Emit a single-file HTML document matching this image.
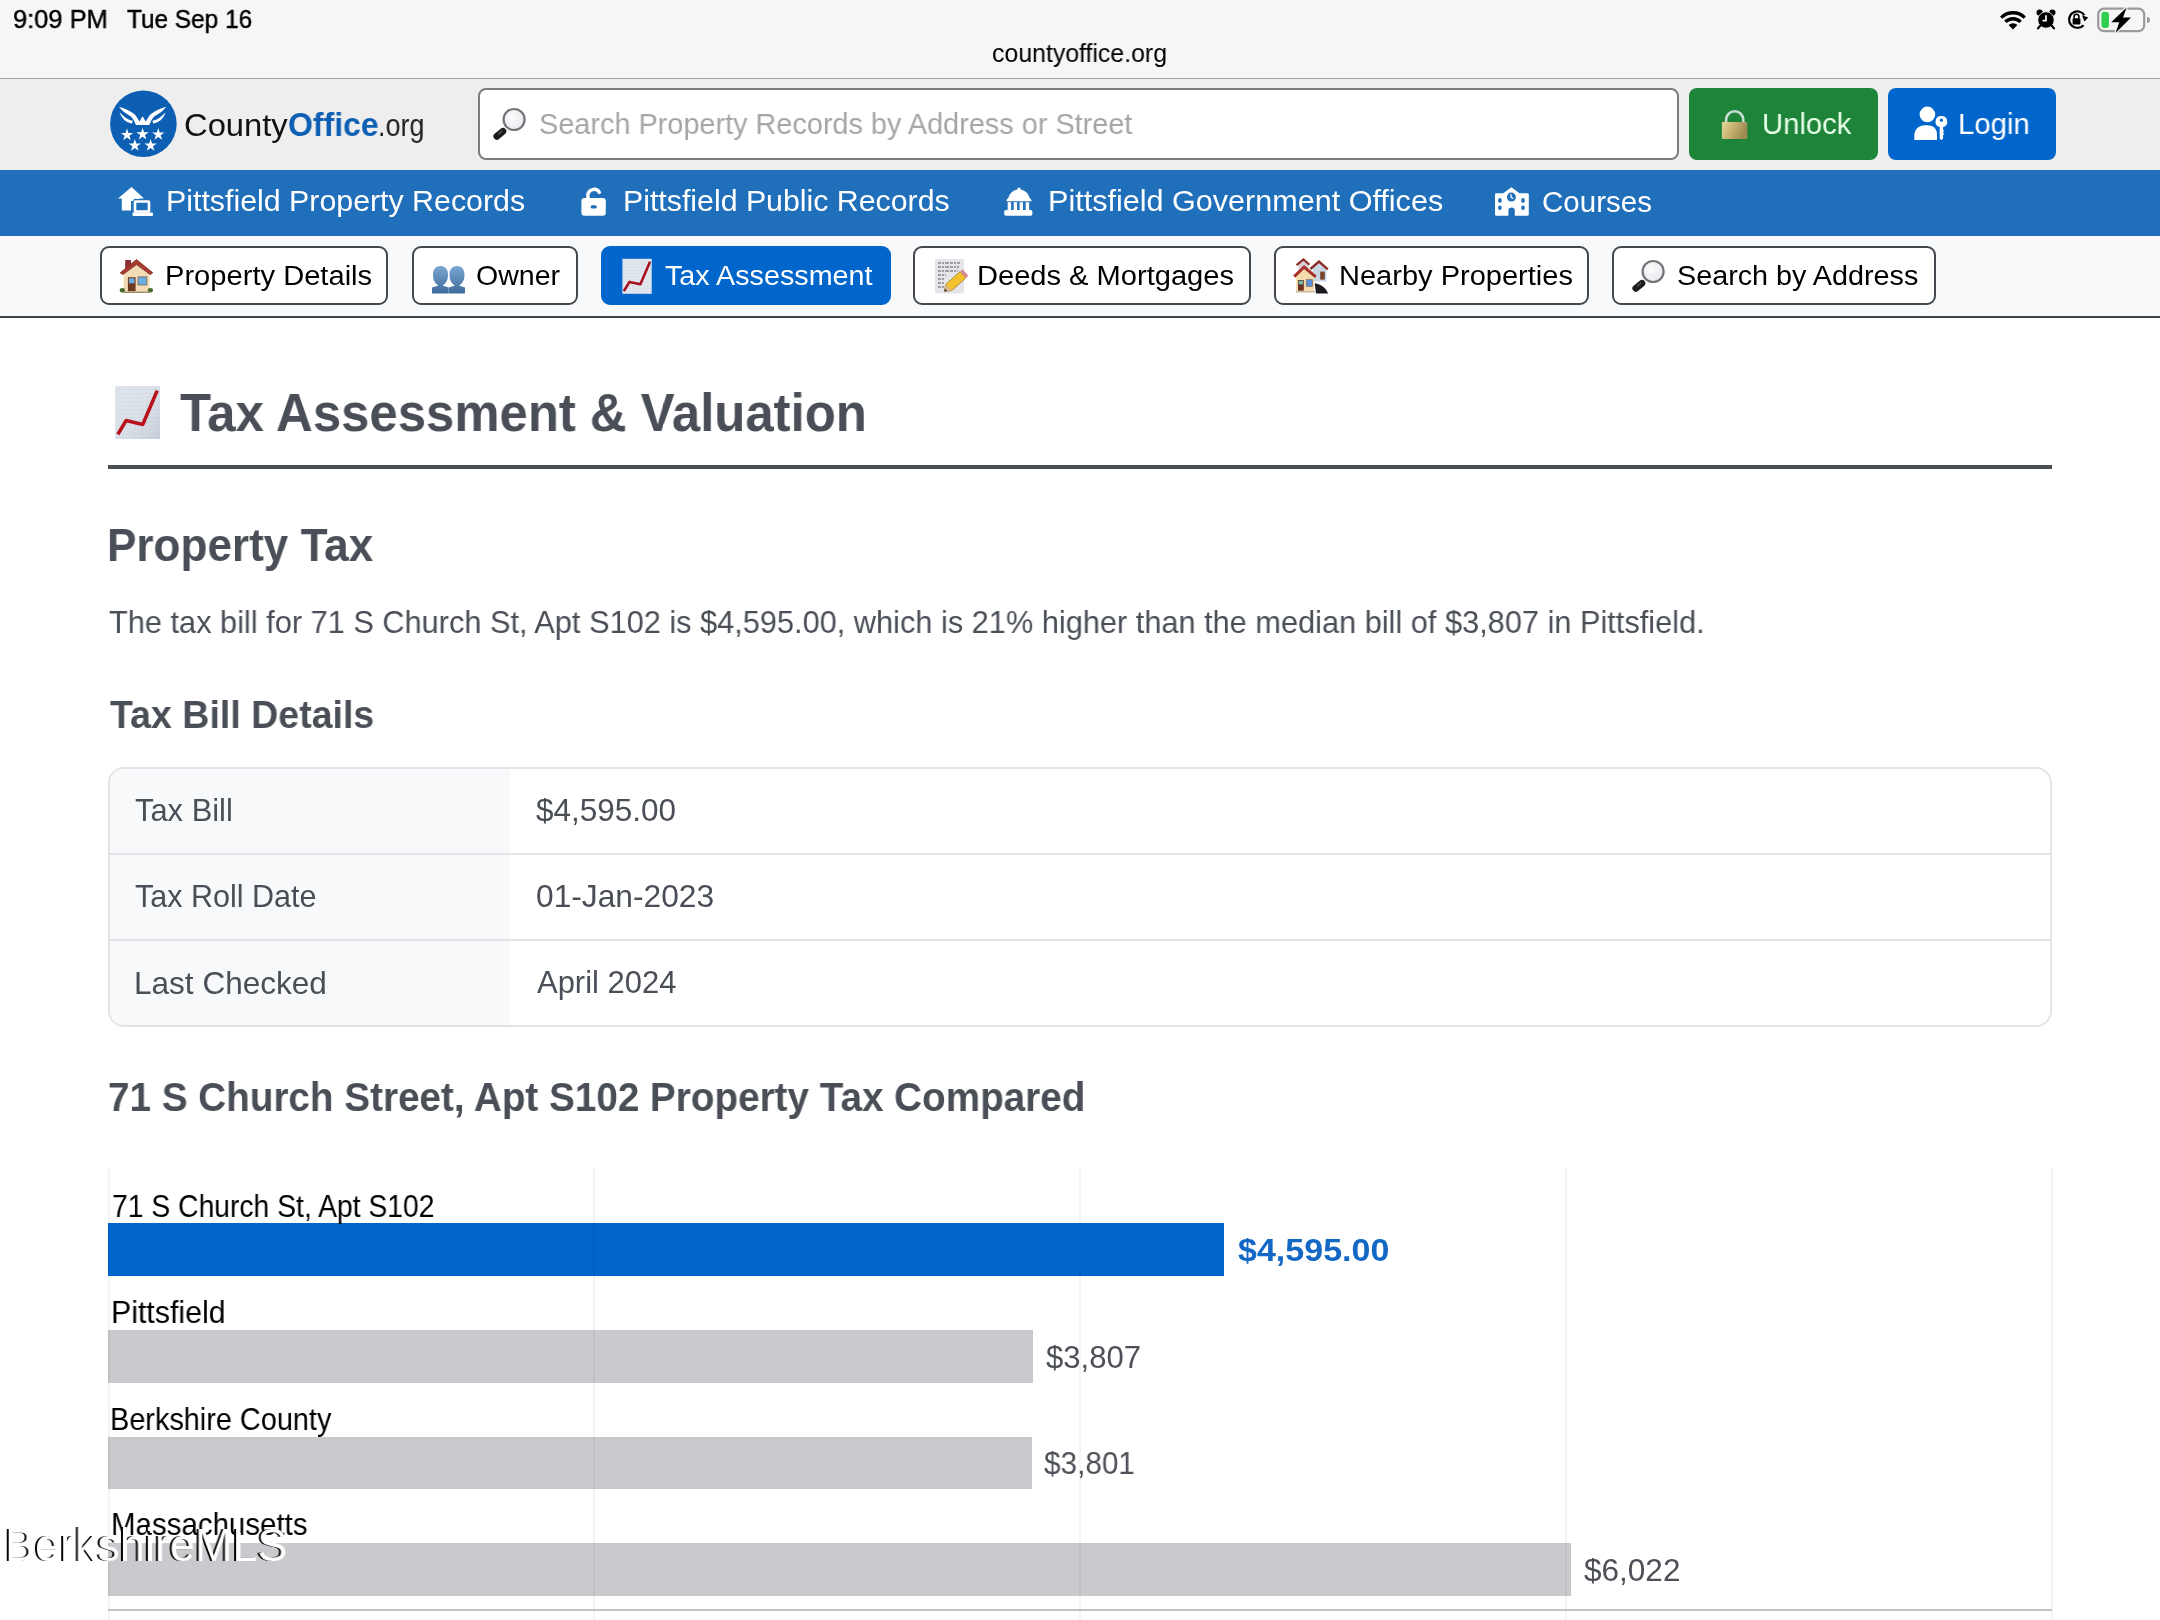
<!DOCTYPE html>
<html><head><meta charset="utf-8">
<style>
html,body{margin:0;padding:0;width:2160px;height:1620px;overflow:hidden;background:#fff;font-family:"Liberation Sans",sans-serif;}
.a{position:absolute;}
.t{position:absolute;white-space:nowrap;line-height:1;transform-origin:0 0;font-family:"Liberation Sans",sans-serif;will-change:transform;}
svg{position:absolute;overflow:visible;}
</style></head>
<body>
<!-- status bar -->
<div class="a" style="left:0;top:0;width:2160px;height:78px;background:#f6f6f6"></div>
<div class="a" style="left:0;top:78px;width:2160px;height:1px;background:#a3a3a3"></div>
<!-- header -->
<div class="a" style="left:0;top:79px;width:2160px;height:91px;background:#eeeeee"></div>
<!-- nav -->
<div class="a" style="left:0;top:170px;width:2160px;height:66px;background:#206fba"></div>
<!-- subnav -->
<div class="a" style="left:0;top:236px;width:2160px;height:80px;background:#f8f9fa"></div>
<div class="a" style="left:0;top:316px;width:2160px;height:2px;background:#40454b"></div>

<!-- search box -->
<div class="a" style="left:478px;top:88px;width:1197px;height:68px;background:#fff;border:2px solid #7d7d7d;border-radius:8px"></div>
<!-- unlock -->
<div class="a" style="left:1689px;top:88px;width:189px;height:72px;background:#1e843a;border-radius:8px"></div>
<!-- login -->
<div class="a" style="left:1888px;top:88px;width:168px;height:72px;background:#0066cc;border-radius:8px"></div>

<!-- subnav buttons -->
<div class="a" style="left:100px;top:246px;width:284px;height:55px;background:#fff;border:2px solid #43484e;border-radius:9px"></div>
<div class="a" style="left:412px;top:246px;width:162px;height:55px;background:#fff;border:2px solid #43484e;border-radius:9px"></div>
<div class="a" style="left:601px;top:246px;width:286px;height:55px;background:#0066cc;border:2px solid #0066cc;border-radius:9px"></div>
<div class="a" style="left:913px;top:246px;width:334px;height:55px;background:#fff;border:2px solid #43484e;border-radius:9px"></div>
<div class="a" style="left:1274px;top:246px;width:311px;height:55px;background:#fff;border:2px solid #43484e;border-radius:9px"></div>
<div class="a" style="left:1612px;top:246px;width:320px;height:55px;background:#fff;border:2px solid #43484e;border-radius:9px"></div>

<!-- title underline -->
<div class="a" style="left:108px;top:465px;width:1944px;height:4px;background:#4a4f55"></div>

<!-- table -->
<div class="a" style="left:108px;top:767px;width:1940px;height:256px;border:2px solid #e2e4e7;border-radius:16px;overflow:hidden;background:#fff">
  <div class="a" style="left:0;top:0;width:400px;height:256px;background:#f8f9fa"></div>
  <div class="a" style="left:0;top:84px;width:1940px;height:2px;background:#e2e4e7"></div>
  <div class="a" style="left:0;top:170px;width:1940px;height:2px;background:#e2e4e7"></div>
</div>

<!-- chart bars -->
<div class="a" style="left:108px;top:1223px;width:1116px;height:53px;background:#0066cc"></div>
<div class="a" style="left:108px;top:1330px;width:925px;height:53px;background:#c9cacd"></div>
<div class="a" style="left:108px;top:1437px;width:924px;height:52px;background:#c9cacd"></div>
<div class="a" style="left:108px;top:1543px;width:1463px;height:53px;background:#c9cacd"></div>
<!-- grid -->
<div class="a" style="left:108px;top:1168px;width:2px;height:452px;background:rgba(0,0,0,0.045)"></div>
<div class="a" style="left:593px;top:1168px;width:2px;height:452px;background:rgba(0,0,0,0.045)"></div>
<div class="a" style="left:1079px;top:1168px;width:2px;height:452px;background:rgba(0,0,0,0.045)"></div>
<div class="a" style="left:1565px;top:1168px;width:2px;height:452px;background:rgba(0,0,0,0.045)"></div>
<div class="a" style="left:2051px;top:1168px;width:2px;height:452px;background:rgba(0,0,0,0.045)"></div>
<div class="a" style="left:108px;top:1609px;width:1944px;height:2px;background:#c2c2c2"></div>

<div class="t" style="left:12.63px;top:6.41px;font-size:26.16px;font-weight:400;color:#000;transform:scaleX(0.9735);-webkit-text-stroke:0.45px #000;">9:09 PM</div>
<div class="t" style="left:127.40px;top:6.41px;font-size:26.16px;font-weight:400;color:#000;transform:scaleX(0.9318);-webkit-text-stroke:0.45px #000;">Tue Sep 16</div>
<div class="t" style="left:183.58px;top:108.61px;font-size:31.98px;font-weight:400;color:#111;transform:scaleX(1.0240);">County</div>
<div class="t" style="left:287.63px;top:108.67px;font-size:32.85px;font-weight:700;color:#0d5fb3;transform:scaleX(0.9743);">Office</div>
<div class="t" style="left:378.11px;top:108.61px;font-size:31.98px;font-weight:400;color:#222;transform:scaleX(0.8428);">.org</div>
<div class="t" style="left:991.91px;top:41.32px;font-size:25.0px;font-weight:400;color:#000;transform:scaleX(0.9941);">countyoffice.org</div>
<div class="t" style="left:538.61px;top:109.67px;font-size:29.07px;font-weight:400;color:#a6a6a6;transform:scaleX(0.9928);">Search Property Records by Address or Street</div>
<div class="t" style="left:1762.03px;top:109.28px;font-size:29.65px;font-weight:400;color:#e8ffe8;transform:scaleX(0.9858);">Unlock</div>
<div class="t" style="left:1958.22px;top:109.28px;font-size:29.65px;font-weight:400;color:#fff;transform:scaleX(0.9894);">Login</div>
<div class="t" style="left:166.03px;top:186.32px;font-size:29.36px;font-weight:400;color:#fff;transform:scaleX(1.0331);">Pittsfield Property Records</div>
<div class="t" style="left:622.94px;top:186.32px;font-size:29.36px;font-weight:400;color:#fff;transform:scaleX(1.0319);">Pittsfield Public Records</div>
<div class="t" style="left:1047.62px;top:186.32px;font-size:29.36px;font-weight:400;color:#fff;transform:scaleX(1.0409);">Pittsfield Government Offices</div>
<div class="t" style="left:1541.99px;top:187.02px;font-size:29.36px;font-weight:400;color:#fff;transform:scaleX(1.0053);">Courses</div>
<div class="t" style="left:164.74px;top:261.23px;font-size:28.34px;font-weight:400;color:#000;transform:scaleX(1.0278);">Property Details</div>
<div class="t" style="left:476.39px;top:261.23px;font-size:28.34px;font-weight:400;color:#000;transform:scaleX(1.0074);">Owner</div>
<div class="t" style="left:664.80px;top:261.23px;font-size:28.34px;font-weight:400;color:#fff;transform:scaleX(1.0139);">Tax Assessment</div>
<div class="t" style="left:977.15px;top:261.23px;font-size:28.34px;font-weight:400;color:#000;transform:scaleX(1.0262);">Deeds &amp; Mortgages</div>
<div class="t" style="left:1338.75px;top:261.23px;font-size:28.34px;font-weight:400;color:#000;transform:scaleX(1.0246);">Nearby Properties</div>
<div class="t" style="left:1676.89px;top:261.23px;font-size:28.34px;font-weight:400;color:#000;transform:scaleX(1.0149);">Search by Address</div>
<div class="t" style="left:180.00px;top:386.11px;font-size:53.78px;font-weight:700;color:#4a4f57;transform:scaleX(0.9459);">Tax Assessment &amp; Valuation</div>
<div class="t" style="left:107.36px;top:521.94px;font-size:46.51px;font-weight:700;color:#4a4f57;transform:scaleX(0.9480);">Property Tax</div>
<div class="t" style="left:109.10px;top:606.95px;font-size:31.1px;font-weight:400;color:#4a4f57;transform:scaleX(0.9884);">The tax bill for 71 S Church St, Apt S102 is $4,595.00, which is 21% higher than the median bill of $3,807 in Pittsfield.</div>
<div class="t" style="left:110.10px;top:695.48px;font-size:39.24px;font-weight:700;color:#4a4f57;transform:scaleX(0.9569);">Tax Bill Details</div>
<div class="t" style="left:135.20px;top:794.94px;font-size:30.52px;font-weight:400;color:#4a4f57;transform:scaleX(1.0119);">Tax Bill</div>
<div class="t" style="left:135.20px;top:880.74px;font-size:30.52px;font-weight:400;color:#4a4f57;transform:scaleX(0.9995);">Tax Roll Date</div>
<div class="t" style="left:134.13px;top:967.54px;font-size:30.52px;font-weight:400;color:#4a4f57;transform:scaleX(1.0339);">Last Checked</div>
<div class="t" style="left:536.00px;top:794.74px;font-size:30.52px;font-weight:400;color:#4a4f57;transform:scaleX(1.0313);">$4,595.00</div>
<div class="t" style="left:535.96px;top:880.94px;font-size:30.52px;font-weight:400;color:#4a4f57;transform:scaleX(1.0397);">01-Jan-2023</div>
<div class="t" style="left:537.00px;top:967.04px;font-size:30.52px;font-weight:400;color:#4a4f57;transform:scaleX(1.0143);">April 2024</div>
<div class="t" style="left:108.14px;top:1076.80px;font-size:40.41px;font-weight:700;color:#4a4f57;transform:scaleX(0.9566);">71 S Church Street, Apt S102 Property Tax Compared</div>
<div class="t" style="left:111.59px;top:1191.72px;font-size:30.96px;font-weight:400;color:#000;transform:scaleX(0.9142);">71 S Church St, Apt S102</div>
<div class="t" style="left:110.54px;top:1298.02px;font-size:30.96px;font-weight:400;color:#000;transform:scaleX(0.9793);">Pittsfield</div>
<div class="t" style="left:110.24px;top:1405.02px;font-size:30.96px;font-weight:400;color:#000;transform:scaleX(0.9325);">Berkshire County</div>
<div class="t" style="left:110.90px;top:1510.42px;font-size:30.96px;font-weight:400;color:#000;transform:scaleX(0.9522);">Massachusetts</div>
<div class="t" style="left:1237.60px;top:1236.20px;font-size:30.81px;font-weight:700;color:#1268c4;transform:scaleX(1.1048);">$4,595.00</div>
<div class="t" style="left:1046.10px;top:1341.94px;font-size:30.52px;font-weight:400;color:#4d5157;transform:scaleX(1.0192);">$3,807</div>
<div class="t" style="left:1044.00px;top:1447.84px;font-size:30.52px;font-weight:400;color:#4d5157;transform:scaleX(0.9737);">$3,801</div>
<div class="t" style="left:1584.00px;top:1555.04px;font-size:30.52px;font-weight:400;color:#4d5157;transform:scaleX(1.0333);">$6,022</div>
<div class="t" style="left:3.30px;top:1522.24px;font-size:46.51px;font-weight:400;color:#000;transform:scaleX(0.9666);">BerkshireMLS</div>
<div class="t" style="left:4.90px;top:1522.24px;font-size:46.51px;font-weight:400;color:#fff;transform:scaleX(0.9666);">BerkshireMLS</div>

<!-- status icons -->
<svg style="left:1999px;top:10px" width="28" height="20" viewBox="0 0 28 20">
  <path d="M14 19.5 L9.6 15.1 A6.2 6.2 0 0 1 18.4 15.1 Z" fill="#000"/>
  <path d="M6.4 11.9 A10.8 10.8 0 0 1 21.6 11.9" stroke="#000" stroke-width="3.3" fill="none"/>
  <path d="M2.2 7.6 A16.8 16.8 0 0 1 25.8 7.6" stroke="#000" stroke-width="3.3" fill="none"/>
</svg>
<svg style="left:2036px;top:9px" width="20" height="21" viewBox="0 0 20 21">
  <circle cx="3.6" cy="3.6" r="3.1" fill="#000"/><circle cx="16.4" cy="3.6" r="3.1" fill="#000"/>
  <circle cx="10" cy="11" r="8.2" fill="#000" stroke="#f6f6f6" stroke-width="0.8"/>
  <path d="M4.2 16.8 L2 19.4 M15.8 16.8 L18 19.4" stroke="#000" stroke-width="2.2" stroke-linecap="round"/>
  <path d="M10 6.2 V11.6 H6.6" stroke="#fff" stroke-width="1.7" fill="none"/>
</svg>
<svg style="left:2066px;top:9px" width="23" height="21" viewBox="0 0 23 21">
  <path d="M17.6 16.2 A8.3 8.3 0 1 1 18.4 6.2" stroke="#000" stroke-width="2.2" fill="none"/>
  <path d="M15.2 7.5 L22 7.5 L19.6 12.5 Z" fill="#000" transform="rotate(20 19 9)"/>
  <rect x="6.6" y="9.2" width="7.8" height="6.4" rx="0.8" fill="#000"/>
  <path d="M8.1 9.6 V7.6 A2.4 2.4 0 0 1 12.9 7.6 V9.6" stroke="#000" stroke-width="1.6" fill="none"/>
</svg>
<svg style="left:2097px;top:7px" width="54" height="26" viewBox="0 0 54 26">
  <rect x="1.2" y="1.6" width="46" height="22.6" rx="6" fill="none" stroke="#9a9a9a" stroke-width="2.2"/>
  <path d="M50 10 A3 3 0 0 1 50 16 Z" fill="#9a9a9a"/>
  <rect x="4.4" y="4.8" width="7.6" height="16.2" rx="3" fill="#2fcf4f"/>
  <path d="M29.6 0.4 L14.2 15.2 L22.2 15.2 L18.6 25.9 L34 10.4 L26 10.4 Z" fill="#f6f6f6" stroke="#f6f6f6" stroke-width="2.4" stroke-linejoin="round"/>
  <path d="M29.6 0.4 L14.2 15.2 L22.2 15.2 L18.6 25.9 L34 10.4 L26 10.4 Z" fill="#000"/>
</svg>

<!-- logo -->
<svg style="left:109px;top:90px" width="68" height="68" viewBox="0 0 68 68">
  <circle cx="34.4" cy="33.8" r="33.3" fill="#0d5fb3"/>
  <path d="M10 16.7 C16 18.5 23 21.5 26.7 25.5 L30.5 31.5 L33.6 26.2 L36.7 31.5 L40.5 25.5 C44.2 21.5 51.2 18.5 57.2 16.7 C53.7 22 47.7 24.5 44.7 27 C43 29 41.5 32 40.3 34.9 L27 34.9 C25.7 32 24.2 29 22.5 27 C19.5 24.5 13.5 22 10 16.7 Z" fill="#fff"/>
  <path d="M10.7 22.3 C12.5 28.5 17 32.8 23 33.6 L23.8 30.8 C18.5 29.8 14.5 26.8 10.7 22.3 Z" fill="#fff"/>
  <path d="M56.5 22.3 C54.7 28.5 50.2 32.8 44.2 33.6 L43.4 30.8 C48.7 29.8 52.7 26.8 56.5 22.3 Z" fill="#fff"/>
  <g fill="#fff">
   <path id="st" d="M0 -6.5 L1.46 -2.01 L6.18 -2.01 L2.36 0.77 L3.82 5.26 L0 2.48 L-3.82 5.26 L-2.36 0.77 L-6.18 -2.01 L-1.46 -2.01 Z" transform="translate(18 44.9)"/>
   <use href="#st" transform="translate(15.6 -0.6)"/>
   <use href="#st" transform="translate(31.3 -0.3)"/>
   <use href="#st" transform="translate(7.8 10.5)"/>
   <use href="#st" transform="translate(23.6 10.5)"/>
  </g>
</svg>

<!-- search magnifier -->
<svg style="left:492px;top:107px" width="35" height="35" viewBox="0 0 35 35">
  <defs>
   <radialGradient id="gl" cx="0.4" cy="0.4" r="0.7"><stop offset="0" stop-color="#fbfbfc"/><stop offset="1" stop-color="#e6e8ec"/></radialGradient>
   <linearGradient id="hd" x1="0" y1="0" x2="1" y2="1"><stop offset="0" stop-color="#555"/><stop offset="1" stop-color="#111"/></linearGradient>
  </defs>
  <path d="M4.8 29.4 L10.9 24.3" stroke="#1c1c1e" stroke-width="6.8" stroke-linecap="round"/>
  <path d="M6.5 27 L10 24" stroke="#5a5a5e" stroke-width="1.2" stroke-linecap="round"/>
  <circle cx="22.1" cy="12.5" r="10.5" fill="url(#gl)" stroke="#727478" stroke-width="2.2"/>
</svg>
<svg style="left:1631px;top:259px" width="35" height="35" viewBox="0 0 35 35">
  <path d="M4.8 29.4 L10.9 24.3" stroke="#1c1c1e" stroke-width="6.8" stroke-linecap="round"/>
  <path d="M6.5 27 L10 24" stroke="#5a5a5e" stroke-width="1.2" stroke-linecap="round"/>
  <circle cx="22.1" cy="12.5" r="10.5" fill="url(#gl)" stroke="#727478" stroke-width="2.2"/>
</svg>

<!-- unlock padlock -->
<svg style="left:1720px;top:108px" width="30" height="33" viewBox="0 0 30 33">
  <defs><linearGradient id="gd" x1="0" y1="0" x2="1" y2="0.3"><stop offset="0" stop-color="#e6dc98"/><stop offset="0.45" stop-color="#c8b472"/><stop offset="1" stop-color="#9c8a52"/></linearGradient></defs>
  <path d="M6.1 15 V11.8 A8.6 8.6 0 0 1 23.3 11.8 V15" stroke="#c6dcd0" stroke-width="2.6" fill="none"/>
  <rect x="1.9" y="14" width="25.4" height="17" rx="1" fill="url(#gd)"/>
</svg>

<!-- login person key -->
<svg style="left:1913px;top:105px" width="36" height="38" viewBox="0 0 36 38">
  <circle cx="14.4" cy="9.4" r="7.8" fill="#fff"/>
  <path d="M1.3 35 V30.5 C1.3 24.2 6 20.2 12 20.2 H14.2 C19.8 20.2 24 23.6 24 29 V35 Z" fill="#fff"/>
  <path d="M28.4 10.2 A6.4 6.4 0 0 1 30.8 22.6 V24.5 L32.2 25.8 L30.8 27.3 L32.2 28.8 L30.8 30.3 V33.6 L28.4 36.2 L26 33.6 V22.6 A6.4 6.4 0 0 1 28.4 10.2 Z" fill="#fff" stroke="#0066cc" stroke-width="1.4"/>
  <circle cx="28.4" cy="15.2" r="1.6" fill="#0066cc"/>
</svg>

<!-- nav icons -->
<svg style="left:117px;top:186px" width="37" height="31" viewBox="0 0 37 31">
  <path d="M14.5 1 L1 12.5 L4.8 12.5 L4.8 24.5 L14 24.5 L14 15 L22.5 15 L22.5 12.5 L27 12.5 Z" fill="#fff"/>
  <rect x="16.5" y="13" width="17" height="12.5" rx="1" fill="#206fba"/>
  <rect x="18" y="15.5" width="14" height="10" rx="0.6" fill="none" stroke="#fff" stroke-width="2.6"/>
  <rect x="15.5" y="26.5" width="20.5" height="3.5" rx="1" fill="#fff"/>
</svg>
<svg style="left:580px;top:187px" width="28" height="29" viewBox="0 0 28 29">
  <path d="M7.9 11.5 V8.2 A6.2 6.2 0 0 1 19.4 5.4" stroke="#fff" stroke-width="3.4" fill="none" stroke-linecap="round"/>
  <rect x="1.4" y="11" width="24.4" height="17.8" rx="3" fill="#fff"/>
  <rect x="10.6" y="18.3" width="6.2" height="3.2" rx="1.6" fill="#206fba"/>
</svg>
<svg style="left:1004px;top:187px" width="30" height="30" viewBox="0 0 30 30">
  <path d="M15 0.6 C16.2 0.6 16.6 1.6 16.6 2.5 C21.8 3.6 24.8 7.4 25.8 11.4 C27 11.7 27.6 12.8 27.6 14.3 H2.4 C2.4 12.8 3 11.7 4.2 11.4 C5.2 7.4 8.2 3.6 13.4 2.5 C13.4 1.6 13.8 0.6 15 0.6 Z" fill="#fff"/>
  <rect x="3.7" y="15.2" width="3.4" height="8" fill="#fff"/><rect x="9.7" y="15.2" width="3.4" height="8" fill="#fff"/>
  <rect x="15.6" y="15.2" width="3.4" height="8" fill="#fff"/><rect x="21.7" y="15.2" width="3.4" height="8" fill="#fff"/>
  <rect x="0.2" y="23" width="28.2" height="5.8" rx="1.8" fill="#fff"/>
</svg>
<svg style="left:1493px;top:186px" width="38" height="31" viewBox="0 0 38 31">
  <path d="M2 8.6 Q2 7.2 3.4 7.2 H10.3 L18.4 1.3 L26.5 7.2 H34.4 Q35.8 7.2 35.8 8.6 V28.4 Q35.8 29.8 34.4 29.8 H21.8 V24.6 A3.2 3.2 0 0 0 15.4 24.6 V29.8 H3.4 Q2 29.8 2 28.4 Z" fill="#fff"/>
  <circle cx="18.4" cy="11.1" r="4.5" fill="#206fba"/>
  <path d="M18.1 8.2 V11.3 L20.2 12.6" stroke="#fff" stroke-width="1.2" fill="none"/>
  <rect x="5.2" y="12.1" width="3.4" height="4.7" rx="1.6" fill="#206fba"/><rect x="5.2" y="19.4" width="3.4" height="4.5" rx="1.6" fill="#206fba"/>
  <rect x="28.3" y="12.1" width="3.4" height="4.7" rx="1.6" fill="#206fba"/><rect x="28.3" y="19.4" width="3.4" height="4.5" rx="1.6" fill="#206fba"/>
</svg>

<!-- subnav emojis -->
<svg style="left:119px;top:256px" width="35" height="38" viewBox="0 0 35 38">
  <rect x="6.2" y="4" width="5.8" height="9" fill="#8c2e36"/>
  <path d="M4.6 16 V36.6 H30.5 V16 L17.5 6 Z" fill="#f3dcb4"/>
  <path d="M1.2 16.8 L17.5 3.6 L33.8 16.8 L31.2 18.6 L17.5 8.6 L3.8 18.6 Z" fill="#a83a2e" stroke="#7a2a22" stroke-width="0.8" stroke-linejoin="round"/>
  <rect x="8.9" y="21.2" width="7.7" height="14" fill="#6e3a22"/>
  <rect x="10" y="22.3" width="5.5" height="5" fill="#6aaee6"/>
  <rect x="19.1" y="20.9" width="8.6" height="8" fill="#6aaee6" stroke="#7a7a70" stroke-width="1.1"/>
  <ellipse cx="3.4" cy="34.2" rx="2.6" ry="2.3" fill="#4a6a2a"/><ellipse cx="31.4" cy="34.2" rx="2.6" ry="2.3" fill="#4a6a2a"/>
  <rect x="4" y="35.6" width="27" height="1.4" fill="#9c8a70"/>
</svg>
<svg style="left:431px;top:265px" width="35" height="30" viewBox="0 0 35 30">
  <defs><linearGradient id="bu" x1="0" y1="0" x2="0" y2="1"><stop offset="0" stop-color="#7aa6d2"/><stop offset="1" stop-color="#3f6b9c"/></linearGradient></defs>
  <path d="M1 28.5 V22.5 L7.5 20.5 C3 18 2 14 2 9.5 C2 4 5 1 9.5 1 C14 1 17 4 17 9.5 C17 14 16 18 11.5 20.5 L17.5 22.5 V28.5 Z" fill="url(#bu)"/>
  <path d="M17.5 28.5 V22.5 L24 20.5 C19.5 18 18.5 14 18.5 9.5 C18.5 4 21.5 1 26 1 C30.5 1 33.5 4 33.5 9.5 C33.5 14 32.5 18 28 20.5 L34 22.5 V28.5 Z" fill="url(#bu)"/>
</svg>
<svg style="left:620px;top:258px" width="34" height="37" viewBox="0 0 34 37">
  <defs><pattern id="gr" width="3" height="3" patternUnits="userSpaceOnUse"><rect width="3" height="3" fill="#e2e7f0"/><path d="M0 0 H3 M0 0 V3" stroke="#cfd6e0" stroke-width="0.5"/></pattern></defs>
  <rect x="2.4" y="0.8" width="29.3" height="35" fill="url(#gr)"/>
  <path d="M4.4 32.2 L9.5 23.9 L20.4 26.3 L29.6 4.7" stroke="#a8121e" stroke-width="2.6" fill="none" stroke-linejoin="round" stroke-linecap="round"/>
</svg>
<svg style="left:934px;top:258px" width="36" height="37" viewBox="0 0 36 37">
  <rect x="1" y="1" width="29" height="34.5" fill="#e6e6ea"/>
  <g stroke="#55555f" stroke-width="1.1" stroke-dasharray="3 1 2 1 4 1"><path d="M4 5 H26 M4 9 H25 M4 13 H24 M4 17 H12 M4 21 H11 M4 25 H11 M4 29 H10"/></g>
  <path d="M10.3 33.4 L11.9 26.2 L26.1 13.5 L31.9 19.9 L17.7 32.6 Z" fill="#f3c22c" stroke="#8a6a1a" stroke-width="0.7"/>
  <path d="M26.1 13.5 L28.6 11.3 L34.4 17.7 L31.9 19.9 Z" fill="#d98c98"/>
  <path d="M10.3 33.4 L11.9 26.2 L17.7 32.6 Z" fill="#d9b98a"/>
  <path d="M10.3 33.4 L10.9 30.6 L13.2 33 Z" fill="#3a3a3a"/>
</svg>
<svg style="left:1293px;top:256px" width="37" height="39" viewBox="0 0 37 39">
  <path d="M5.5 9 L10.5 4.5 L15.5 9 V16 H5.5 Z" fill="#d8d0d8"/>
  <path d="M3.6 9.2 L10.5 3.4 L16.4 8.8" stroke="#8e2a26" stroke-width="2.2" fill="none"/>
  <path d="M19.8 12.5 L26 6.8 L33.4 13 V25.5 H19.8 Z" fill="#c9d6e6"/>
  <path d="M17.4 13 L26 5.6 L34.8 13.4" stroke="#8e2a26" stroke-width="2.4" fill="none"/>
  <rect x="27.2" y="15.6" width="4.6" height="8" fill="#7a4630"/>
  <path d="M3.1 20 L11.1 12.6 L21 20.5 V36 H3.1 Z" fill="#f5dcae"/>
  <path d="M1.2 20.6 L11.1 11 L22.8 20.8" stroke="#a8322b" stroke-width="3" fill="none"/>
  <rect x="5" y="24" width="5.8" height="10.7" fill="#6e3024"/><rect x="5.8" y="24.8" width="4.2" height="3.6" fill="#66c0b0"/>
  <rect x="13.3" y="23.6" width="6.2" height="6.8" fill="#5a8fd6" stroke="#8a7a70" stroke-width="0.8"/>
  <rect x="3" y="35" width="19" height="1.5" fill="#c8b89a"/>
  <path d="M21.6 27.2 C28.2 28 33.2 32.2 35.2 37.6 L23 37.6 Q22.4 32 21.6 27.2 Z" fill="#1e1a22"/>
</svg>

<!-- title emoji -->
<svg style="left:114px;top:385px" width="48" height="55" viewBox="0 0 48 55">
  <defs><pattern id="gr2" width="4" height="4" patternUnits="userSpaceOnUse"><rect width="4" height="4" fill="#dfe5ec"/><path d="M0 0 H4 M0 0 V4" stroke="#c2cbd6" stroke-width="0.6"/></pattern>
  <linearGradient id="tg" x1="0" y1="0" x2="1" y2="1"><stop offset="0" stop-color="#fff" stop-opacity="0"/><stop offset="1" stop-color="#9aa6b8" stop-opacity="0.35"/></linearGradient></defs>
  <rect x="1" y="1" width="45" height="53" fill="url(#gr2)"/>
  <rect x="1" y="1" width="45" height="53" fill="url(#tg)"/>
  <path d="M3.8 49.4 L12.1 35.6 L28.8 39.4 L43.2 5.6" stroke="#b8121c" stroke-width="3.6" fill="none" stroke-linejoin="round"/>
</svg>


</body></html>
